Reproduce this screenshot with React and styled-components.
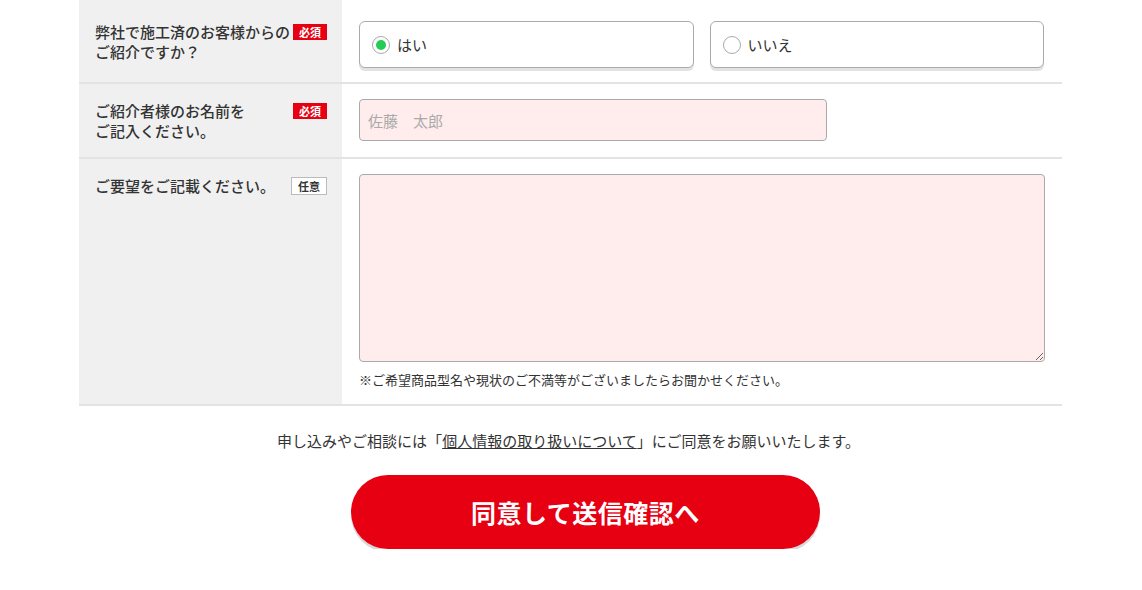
import styled, { createGlobalStyle } from "styled-components";

const GlobalStyle = createGlobalStyle`
  html, body {
    margin: 0;
    padding: 0;
    background: #fff;
  }
  body {
    font-family: "Noto Sans CJK JP", "Noto Sans", sans-serif;
    color: #333;
  }
  * { box-sizing: border-box; }
`;

export default function App() {
  return (
    <>
      <GlobalStyle />
      <Wrapper>
        <Table>
          <Row $stub>
            <Head />
            <Cell />
          </Row>
          <Row>
            <Head>
              <HeadText>弊社で施工済のお客様からのご紹介ですか？</HeadText>
              <Badge $required>必須</Badge>
            </Head>
            <Cell $pad="16px 18px 14px 17px">
              <RadioGroup>
                <RadioBox>
                  <RadioMark $checked />
                  はい
                </RadioBox>
                <RadioBox>
                  <RadioMark />
                  いいえ
                </RadioBox>
              </RadioGroup>
            </Cell>
          </Row>
          <Row>
            <Head>
              <HeadText>
                ご紹介者様のお名前を
                <br />
                ご記入ください。
              </HeadText>
              <Badge $required>必須</Badge>
            </Head>
            <Cell $pad="15px 18px 14px 17px">
              <TextInput placeholder="佐藤　太郎" />
            </Cell>
          </Row>
          <Row>
            <Head>
              <HeadText>ご要望をご記載ください。</HeadText>
              <Badge>任意</Badge>
            </Head>
            <Cell $pad="15px 17px 15px 17px">
              <TextArea />
              <Note>※ご希望商品型名や現状のご不満等がございましたらお聞かせください。</Note>
            </Cell>
          </Row>
        </Table>

        <Agree>
          申し込みやご相談には「<AgreeLink href="#">個人情報の取り扱いについて</AgreeLink>」にご同意をお願いいたします。
        </Agree>

        <ButtonWrap>
          <SubmitButton type="button">同意して送信確認へ</SubmitButton>
        </ButtonWrap>
      </Wrapper>
    </>
  );
}

const Wrapper = styled.div`
  width: 983px;
  margin-left: calc(50% - 492px);
`;

const Table = styled.div`
  display: flex;
  flex-direction: column;
`;

const Row = styled.div`
  display: grid;
  grid-template-columns: 263px 1fr;
  border-bottom: 2px solid #e3e3e3;
  height: ${(p) => (p.$stub ? "6px" : "auto")};
  margin-top: ${(p) => (p.$stub ? "-1px" : "0")};

  &:first-child {
    border-bottom-width: 1px;
  }
`;

const Head = styled.div`
  background: #f0f0f0;
  display: flex;
  align-items: flex-start;
  justify-content: space-between;
  padding: 17px 15px 16px 16px;
`;

const HeadText = styled.div`
  font-size: 15px;
  line-height: 20px;
  font-weight: 500;
  color: #333;
  width: 200px;
`;

const Badge = styled.span`
  flex: none;
  width: ${(p) => (p.$required ? "34px" : "36px")};
  margin-top: ${(p) => (p.$required ? "2px" : "1px")};
  height: ${(p) => (p.$required ? "16px" : "18px")};
  font-size: 11px;
  line-height: 16px;
  font-weight: 700;
  text-align: center;
  color: ${(p) => (p.$required ? "#fff" : "#333")};
  background: ${(p) => (p.$required ? "#e60012" : "#fff")};
  border: ${(p) => (p.$required ? "none" : "1px solid #bbb")};
`;

const Cell = styled.div`
  padding: ${(p) => p.$pad || "0"};
  background: #fff;
`;

const RadioGroup = styled.div`
  display: grid;
  grid-template-columns: 1fr 1fr;
  gap: 16px;
`;

const RadioBox = styled.label`
  display: flex;
  align-items: center;
  gap: 7px;
  height: 47px;
  padding: 0 12px;
  border: 1px solid #aaa;
  border-radius: 6px;
  background: #fff;
  box-shadow: 0 3px 0 #e2e2e2;
  font-size: 15px;
  color: #333;
  cursor: pointer;
`;

const RadioMark = styled.span`
  width: 18px;
  height: 18px;
  border-radius: 50%;
  border: 1px solid #aaa;
  background: #fff;
  position: relative;

  &::after {
    content: "";
    display: ${(p) => (p.$checked ? "block" : "none")};
    position: absolute;
    top: 3px;
    left: 3px;
    width: 10px;
    height: 10px;
    border-radius: 50%;
    background: #22cc55;
  }
`;

const TextInput = styled.input`
  display: block;
  width: 468px;
  height: 42px;
  padding: 0 8px;
  font-family: inherit;
  font-size: 15px;
  color: #333;
  background: #ffeded;
  border: 1px solid #aaa;
  border-radius: 4px;
  outline: none;

  &::placeholder {
    color: #aaa;
  }
`;

const TextArea = styled.textarea`
  display: block;
  width: 100%;
  height: 188px;
  padding: 8px;
  font-family: inherit;
  font-size: 15px;
  background: #ffeded;
  border: 1px solid #aaa;
  border-radius: 4px;
  outline: none;
`;

const Note = styled.p`
  margin: 9px 0 0;
  font-size: 13px;
  line-height: 18px;
  color: #333;
`;

const Agree = styled.p`
  margin: 24px 0 0;
  text-align: center;
  font-size: 15px;
  line-height: 22px;
  color: #333;
  padding-right: 4px;
`;

const AgreeLink = styled.a`
  color: #333;
  text-decoration: underline;
`;

const ButtonWrap = styled.div`
  display: flex;
  justify-content: center;
  padding-left: 30px;
  margin-top: 23px;
`;

const SubmitButton = styled.button`
  width: 469px;
  height: 74px;
  border: none;
  border-radius: 37px;
  background: #e60012;
  box-shadow: 0 3px 0 #d9d9d9;
  color: #fff;
  font-family: inherit;
  font-size: 25px;
  font-weight: 700;
  letter-spacing: 0.5px;
  cursor: pointer;
`;
